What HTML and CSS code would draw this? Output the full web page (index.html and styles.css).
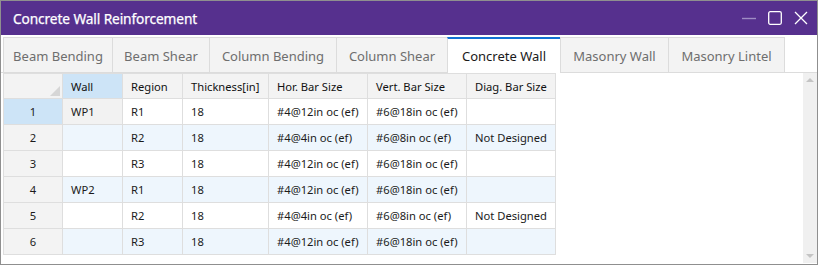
FILE: index.html
```html
<!DOCTYPE html>
<html>
<head>
<meta charset="utf-8">
<link rel="stylesheet" href="styles.css">
</head>
<body>
<div class="window">
  <div class="titlebar">
    <span class="title">Concrete Wall Reinforcement</span>
    <div class="controls">
      <svg class="ctl min" width="16" height="16" viewBox="0 0 16 16"><line x1="1" y1="8.5" x2="15" y2="8.5" stroke="#9f8cc4" stroke-width="1.4"/></svg>
      <svg class="ctl" width="16" height="16" viewBox="0 0 16 16"><rect x="1.7" y="1.7" width="12.6" height="12.6" rx="1.5" fill="none" stroke="#fff" stroke-width="1.3"/></svg>
      <svg class="ctl" width="16" height="16" viewBox="0 0 16 16"><path d="M2 2 L14 14 M14 2 L2 14" stroke="#fff" stroke-width="1.3" fill="none"/></svg>
    </div>
  </div>
  <div class="tabstrip">
    <div class="tab t1">Beam Bending</div>
    <div class="tab t2">Beam Shear</div>
    <div class="tab t3">Column Bending</div>
    <div class="tab t4">Column Shear</div>
    <div class="tab t5 active">Concrete Wall</div>
    <div class="tab t6">Masonry Wall</div>
    <div class="tab t7">Masonry Lintel</div>
  </div>
  <div class="content">
    <div class="grid">
      <div class="hd corner"><span class="tri"></span></div>
      <div class="hd sel">Wall</div>
      <div class="hd">Region</div>
      <div class="hd">Thickness[in]</div>
      <div class="hd">Hor. Bar Size</div>
      <div class="hd">Vert. Bar Size</div>
      <div class="hd">Diag. Bar Size</div>

      <div class="rh sel">1</div>
      <div class="c focus">WP1</div>
      <div class="c">R1</div>
      <div class="c">18</div>
      <div class="c">#4@12in oc (ef)</div>
      <div class="c">#6@18in oc (ef)</div>
      <div class="c"></div>

      <div class="rh">2</div>
      <div class="c alt"></div>
      <div class="c alt">R2</div>
      <div class="c alt">18</div>
      <div class="c alt">#4@4in oc (ef)</div>
      <div class="c alt">#6@8in oc (ef)</div>
      <div class="c alt">Not Designed</div>

      <div class="rh">3</div>
      <div class="c"></div>
      <div class="c">R3</div>
      <div class="c">18</div>
      <div class="c">#4@12in oc (ef)</div>
      <div class="c">#6@18in oc (ef)</div>
      <div class="c"></div>

      <div class="rh">4</div>
      <div class="c alt">WP2</div>
      <div class="c alt">R1</div>
      <div class="c alt">18</div>
      <div class="c alt">#4@12in oc (ef)</div>
      <div class="c alt">#6@18in oc (ef)</div>
      <div class="c alt"></div>

      <div class="rh">5</div>
      <div class="c"></div>
      <div class="c">R2</div>
      <div class="c">18</div>
      <div class="c">#4@4in oc (ef)</div>
      <div class="c">#6@8in oc (ef)</div>
      <div class="c">Not Designed</div>

      <div class="rh">6</div>
      <div class="c alt"></div>
      <div class="c alt">R3</div>
      <div class="c alt">18</div>
      <div class="c alt">#4@12in oc (ef)</div>
      <div class="c alt">#6@18in oc (ef)</div>
      <div class="c alt"></div>
    </div>
    <div class="spacer"></div>
    <div class="scrollbar">
      <span class="arrow up"></span>
      <span class="arrow down"></span>
    </div>
  </div>
</div>
</body>
</html>
```
FILE: styles.css
```css
html, body {
  margin: 0;
  padding: 0;
  background: #ffffff;
}
body {
  font-family: "Noto Sans", "Open Sans", sans-serif;
  color: #1b1b1b;
}
.window {
  width: 818px;
  height: 265px;
  box-sizing: border-box;
  border: 1px solid #8f8f8f;
  display: flex;
  flex-direction: column;
  background: #ffffff;
}
.titlebar {
  height: 34px;
  background: #56308e;
  display: flex;
  align-items: center;
  justify-content: space-between;
  padding-left: 12px;
  padding-right: 8px;
  flex: none;
}
.title {
  color: #ffffff;
  font-size: 13.7px;
  letter-spacing: -0.1px;
  -webkit-text-stroke: 0.25px #ffffff;
}
.controls {
  display: flex;
  gap: 10px;
  align-items: center;
}
.ctl {
  display: block;
}
.tabstrip {
  display: flex;
  padding: 2px 0 0 2px;
  height: 35px;
  border-bottom: 1px solid #dcdcdc;
  flex: none;
}
.tab {
  box-sizing: border-box;
  height: 35px;
  border: 1px solid #dcdcdc;
  border-bottom: none;
  background: #f3f3f3;
  color: #6e6e6e;
  font-size: 13px;
  display: flex;
  align-items: center;
  justify-content: center;
  margin-left: -1px;
  padding-top: 1px;
}
.t1 { width: 110px; margin-left: 0; }
.t2 { width: 98px; }
.t3 { width: 128px; }
.t4 { width: 112px; }
.t5 { width: 114px; }
.t6 { width: 109px; }
.t7 { width: 117px; }
.tab.active {
  background: #ffffff;
  color: #1a1a1a;
  border-top: 2px solid #1272d3;
  height: 36px;
  margin-bottom: -1px;
  padding-top: 0;
}
.content {
  flex: 1;
  display: flex;
  padding-left: 2px;
  min-height: 0;
}
.grid {
  display: grid;
  grid-template-columns: 58px 59px 59px 85px 98px 98px 88px;
  grid-template-rows: 24px repeat(6, 25px);
  gap: 1px;
  padding: 1px;
  background: #dedede;
  align-self: flex-start;
  font-size: 11.2px;
}
.grid > div {
  display: flex;
  align-items: center;
  padding-left: 8px;
  background: #ffffff;
  white-space: nowrap;
}
.grid > .hd {
  background: #f3f3f3;
  color: #111111;
}
.grid > .rh {
  background: #f3f3f3;
  justify-content: center;
  padding-left: 0;
}
.grid > .sel {
  background: #cde4f7;
}
.grid > .focus {
  background: #f2f2f2;
}
.grid > .alt {
  background: #eef6fd;
}
.grid > .corner {
  position: relative;
}
.tri {
  position: absolute;
  right: 2px;
  bottom: 2px;
  width: 0;
  height: 0;
  border-left: 10px solid transparent;
  border-bottom: 10px solid #d6d6d6;
}
.spacer {
  flex: 1;
}
.scrollbar {
  width: 14px;
  background: #f0f0f0;
  display: flex;
  flex-direction: column;
  justify-content: space-between;
  align-items: center;
  padding: 5px 0 5px 0;
  margin-bottom: 1px;
}
.arrow {
  width: 0;
  height: 0;
  border-left: 4px solid transparent;
  border-right: 4px solid transparent;
}
.arrow.up {
  border-bottom: 4px solid #c4c4c4;
}
.arrow.down {
  border-top: 4px solid #c4c4c4;
}
```
